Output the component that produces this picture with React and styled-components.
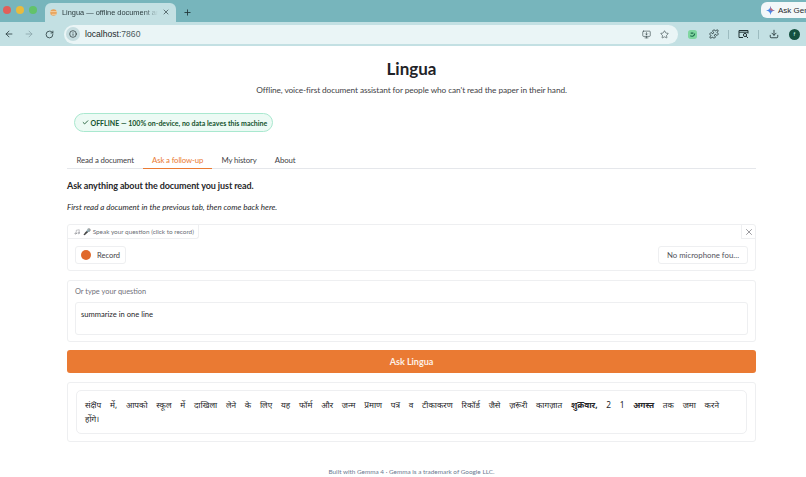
import React from "react";
import styled, { createGlobalStyle } from "styled-components";
import { ArrowLeft, ArrowRight, RotateCw, Info, Star, MonitorDown, Puzzle, Download, Music, X, Plus, Check } from "lucide-react";

const Global = createGlobalStyle`
  html, body { margin: 0; padding: 0; background: #fff; overflow: hidden; }
  body { font-family: Lato, "Noto Sans", "Liberation Sans", sans-serif; color: #27272a; }
  #root { width: 806px; height: 477px; overflow: hidden; }
  * { box-sizing: border-box; }
  svg { flex: none; }
`;
const Page = styled.div`display: flex; flex-direction: column; width: 806px; height: 477px;`;
const TabStrip = styled.div`
  height: 22px; background: #77b5bc; display: flex; align-items: flex-end; padding-left: 45px; position: relative; flex: none;
`;
const Lights = styled.div`position: absolute; left: 3px; top: 6px; display: flex; gap: 5px;`;
const Light = styled.span`width: 8px; height: 8px; border-radius: 50%; background: ${p => p.$c};`;
const Tab = styled.div`
  width: 131px; height: 19px; background: #c3e0e3; border-radius: 6px 6px 0 0; display: flex; align-items: center; padding: 0 6px 1px 4px; gap: 4px;
  font-family: "Liberation Sans", sans-serif; font-size: 7.4px; color: #2b3b3e; white-space: nowrap; overflow: hidden;
`;
const TabTitle = styled.span`
  flex: 1; overflow: hidden;
  mask-image: linear-gradient(90deg, #000 85%, transparent 100%);
`;
const NewTab = styled.div`margin: 0 0 5px 7px; display: flex; color: #23393d;`;
const AskGem = styled.div`
  position: absolute; left: 761px; top: 2px; width: 45px; height: 16px; background: #f3f8f9; border-radius: 6px 0 0 6px; overflow: hidden;
  display: flex; align-items: center; gap: 3px; padding-left: 5px; font-family: "Liberation Sans", sans-serif; font-size: 8px; color: #1e2a2c; white-space: nowrap;
`;
const Toolbar = styled.div`
  height: 24px; background: #c3e0e3; display: flex; align-items: center; flex: none; padding: 0 6px 0 0; color: #35474a;
`;
const Nav = styled.div`display: flex; width: 20px; justify-content: center; margin-left: ${p => p.$ml || 0}px; color: ${p => p.$c || "#2c3f42"};`;
const Omni = styled.div`
  width: 614px; height: 19px; border-radius: 10px; background: #eaf5f6; display: flex; align-items: center; padding: 0 9px 0 2px; margin-left: 5px;
  font-family: "Liberation Sans", sans-serif; font-size: 8.6px; color: #20292b;
`;
const InfoBadge = styled.span`width: 14px; height: 14px; border-radius: 50%; background: #c6dde0; display: flex; align-items: center; justify-content: center; margin-right: 5px;`;
const Host = styled.span`flex: 1; span { color: #4a5a5d; }`;
const OmniIcons = styled.div`display: flex; gap: 9px; color: #3a4a4d;`;
const Right = styled.div`flex: 1; display: flex; align-items: center; color: #1f3033; padding-left: 10px;`;
const Ext = styled.span`width: 9px; height: 9px; display: flex; margin-right: 12px;`;
const Sep = styled.span`width: 1px; height: 9px; background: #9dbcc0; margin: ${p => p.$m};`;
const Avatar = styled.span`width: 11px; height: 11px; border-radius: 50%; background: #14503f; color: #cfe; font-size: 5px; display: flex; align-items: center; justify-content: center; margin-left: 10px;`;
const Main = styled.main`flex: 1; display: flex; flex-direction: column; padding: 0 50px 0 67px;`;
const Title = styled.h1`margin: 11px 0 0; text-align: center; font-size: 17px; line-height: 24px; font-weight: 700; color: #1f2328;`;
const Subtitle = styled.p`margin: 2px 0 0; text-align: center; font-size: 8.3px; letter-spacing: -.1px; line-height: 14px; color: #3f3f46;`;
const Badge = styled.div`
  align-self: flex-start; margin: 16px 0 0 7px; height: 19px; width: 199px; border-radius: 10px; background: #ecfaf4; border: 1px solid #a9e8cf; display: flex; align-items: center; padding: 0 7px;
  font-size: 7px; font-weight: 700; color: #14532d; gap: 1.5px; white-space: nowrap;
`;
const Tabs = styled.div`margin-top: 20px; display: flex; border-bottom: 1px solid #e5e7eb; height: 17px; padding-left: .5px;`;
const TabBtn = styled.div`
  padding: 0 9.1px; font-size: 7.8px; letter-spacing: -.14px; line-height: 16px; color: ${p => p.$on ? "#ea7a33" : "#3f3f46"}; white-space: nowrap;
  border-bottom: ${p => p.$on ? "1.5px solid #ea7a33" : "none"}; height: 17px;
`;
const Heading = styled.h3`margin: 10px 0 0; font-size: 9px; letter-spacing: -.1px; line-height: 14px; font-weight: 700; color: #27272a;`;
const Hint = styled.p`margin: 8px 0 0; font-size: 8px; line-height: 12px; font-style: italic; color: #27272a;`;
const Card = styled.section`
  border: 1px solid #eeeff1; border-radius: 3px; background: #fff; position: relative; flex: none;
`;
const AudioCard = styled(Card)`margin-top: 11px; height: 47px;`;
const AudioLabel = styled.div`
  position: absolute; left: 0; top: 0; height: 14px; border: solid #eeeff1; border-width: 0 1px 1px 0; border-radius: 0 0 3px 0; display: flex; align-items: center; gap: 3px; padding: 0 4px 0 6px;
  font-size: 6.4px; color: #6b6f76; white-space: nowrap;
`;
const Close = styled.div`position: absolute; right: 0; top: 0; width: 14px; height: 14px; display: flex; align-items: center; justify-content: center; border: solid #eeeff1; border-width: 0 0 1px 1px; color: #52525b;`;
const AudioRow = styled.div`position: absolute; left: 7px; right: 7px; top: 21px; display: flex; justify-content: space-between;`;
const Record = styled.div`
  height: 18px; width: 51px; border: 1px solid #eeeff1; border-radius: 3px; display: flex; align-items: center; gap: 6px; padding-left: 5px; font-size: 7.5px; color: #3f3f46;
`;
const Dot = styled.span`width: 10px; height: 10px; border-radius: 50%; background: #e0682b;`;
const Mic = styled.div`height: 18px; width: 90px; border: 1px solid #eeeff1; border-radius: 3px; display: flex; align-items: center; justify-content: center; font-size: 7.8px; color: #52525b; white-space: nowrap;`;
const InputCard = styled(Card)`margin-top: 9px; height: 62px; padding: 6px 7px;`;
const Label = styled.div`font-size: 7.4px; line-height: 10px; color: #71717a;`;
const Input = styled.div`margin-top: 5px; height: 33px; border: 1px solid #eeeff1; border-radius: 3px; padding: 5px; font-size: 7.6px; line-height: 12px; color: #27272a;`;
const Ask = styled.div`
  margin-top: 8px; height: 23px; border-radius: 3px; background: #ea7a33; color: #fdf1e8; display: flex; align-items: center; justify-content: center; font-size: 9px; font-weight: 700; flex: none;
`;
const AnswerCard = styled(Card)`margin-top: 9px; height: 60px; padding: 7px 8px;`;
const Answer = styled.div`
  height: 44px; border: 1px solid #eeeff1; border-radius: 5px; padding: 7px 27px 7px 8px;
  font-family: "Noto Sans", sans-serif; font-size: 8.3px; line-height: 14px; color: #27272a;
`;
const AnswerLine = styled.div`text-align: justify; text-align-last: ${p => p.$full ? "justify" : "left"};`;
const Footer = styled.footer`margin: 25px 0 0; text-align: center; font-size: 6.4px; line-height: 10px; color: #6b7a90;`;

function GemIcon() {
  return <svg width="9" height="9" viewBox="0 0 10 10"><path d="M5 0C5.4 3 7 4.6 10 5 7 5.4 5.4 7 5 10 4.6 7 3 5.4 0 5 3 4.6 4.6 3 5 0Z" fill="#4a86e8"/><path d="M5 0C5.4 3 7 4.6 10 5H5Z" fill="#e8655a"/></svg>;
}
function Favicon() {
  return <svg width="9" height="9" viewBox="0 0 10 10"><circle cx="5" cy="5" r="3.6" fill="#e8a25a"/><path d="M1 4h8M3 7h5" stroke="#f3d3a8" strokeWidth="1"/></svg>;
}
function SidePanelSearch() {
  return <svg width="11" height="10" viewBox="0 0 11 10" fill="none" stroke="currentColor" strokeWidth="1"><path d="M5 8.5H1V1.5h9v3"/><path d="M1 3.2h9" /><circle cx="7" cy="6" r="1.6"/><path d="M8.2 7.2 10 9"/></svg>;
}

export default function App() {
  return (
    <Page>
      <Global />
      <TabStrip>
        <Lights>
          <Light $c="#e0605a" /><Light $c="#e8bb3f" /><Light $c="#62c26a" />
        </Lights>
        <Tab>
          <Favicon />
          <TabTitle>Lingua — offline document analyzer</TabTitle>
          <X size={8} strokeWidth={2} />
        </Tab>
        <NewTab><Plus size={9} strokeWidth={2.4} /></NewTab>
        <AskGem><GemIcon />Ask Gem</AskGem>
      </TabStrip>
      <Toolbar>
        <Nav $ml={-1}><ArrowLeft size={10} strokeWidth={2} /></Nav>
        <Nav $c="#8aa5a9"><ArrowRight size={10} strokeWidth={2} /></Nav>
        <Nav><RotateCw size={9} strokeWidth={2.2} /></Nav>
        <Omni>
          <InfoBadge><Info size={8} strokeWidth={2} /></InfoBadge>
          <Host>localhost<span>:7860</span></Host>
          <OmniIcons>
            <MonitorDown size={9} strokeWidth={1.7} />
            <Star size={9} strokeWidth={1.7} />
          </OmniIcons>
        </Omni>
        <Right>
          <Ext><svg width="9" height="9" viewBox="0 0 10 10"><rect width="10" height="10" rx="3" fill="#7fd6a0"/><path d="M2.5 6.5c2 1 5 0 5-2.5M3 3.5h3" stroke="#1c6b4a" strokeWidth="1.2" fill="none"/></svg></Ext>
          <Puzzle size={10} strokeWidth={2} />
          <Sep $m="0 9px 0 9px" />
          <SidePanelSearch />
          <Sep $m="0 10px 0 9px" />
          <Download size={10} strokeWidth={2} />
          <Avatar>f</Avatar>
        </Right>
      </Toolbar>
      <Main>
        <Title>Lingua</Title>
        <Subtitle>Offline, voice-first document assistant for people who can't read the paper in their hand.</Subtitle>
        <Badge><Check size={7} strokeWidth={3} />OFFLINE — 100% on-device, no data leaves this machine</Badge>
        <Tabs>
          <TabBtn>Read a document</TabBtn>
          <TabBtn $on>Ask a follow-up</TabBtn>
          <TabBtn>My history</TabBtn>
          <TabBtn>About</TabBtn>
        </Tabs>
        <Heading>Ask anything about the document you just read.</Heading>
        <Hint>First read a document in the previous tab, then come back here.</Hint>
        <AudioCard>
          <AudioLabel><Music size={6} strokeWidth={1.5} />🎤 Speak your question (click to record)</AudioLabel>
          <Close><X size={10} strokeWidth={1.4} /></Close>
          <AudioRow>
            <Record><Dot />Record</Record>
            <Mic>No microphone fou…</Mic>
          </AudioRow>
        </AudioCard>
        <InputCard>
          <Label>Or type your question</Label>
          <Input>summarize in one line</Input>
        </InputCard>
        <Ask>Ask Lingua</Ask>
        <AnswerCard>
          <Answer>
            <AnswerLine $full>संक्षेप में, आपको स्कूल में दाखिला लेने के लिए यह फॉर्म और जन्म प्रमाण पत्र व टीकाकरण रिकॉर्ड जैसे ज़रूरी कागज़ात <b>शुक्रवार,</b> 2 1 <b>अगस्त</b> तक जमा करने</AnswerLine>
            <AnswerLine>होंगे।</AnswerLine>
          </Answer>
        </AnswerCard>
        <Footer>Built with Gemma 4 · Gemma is a trademark of Google LLC.</Footer>
      </Main>
    </Page>
  );
}
